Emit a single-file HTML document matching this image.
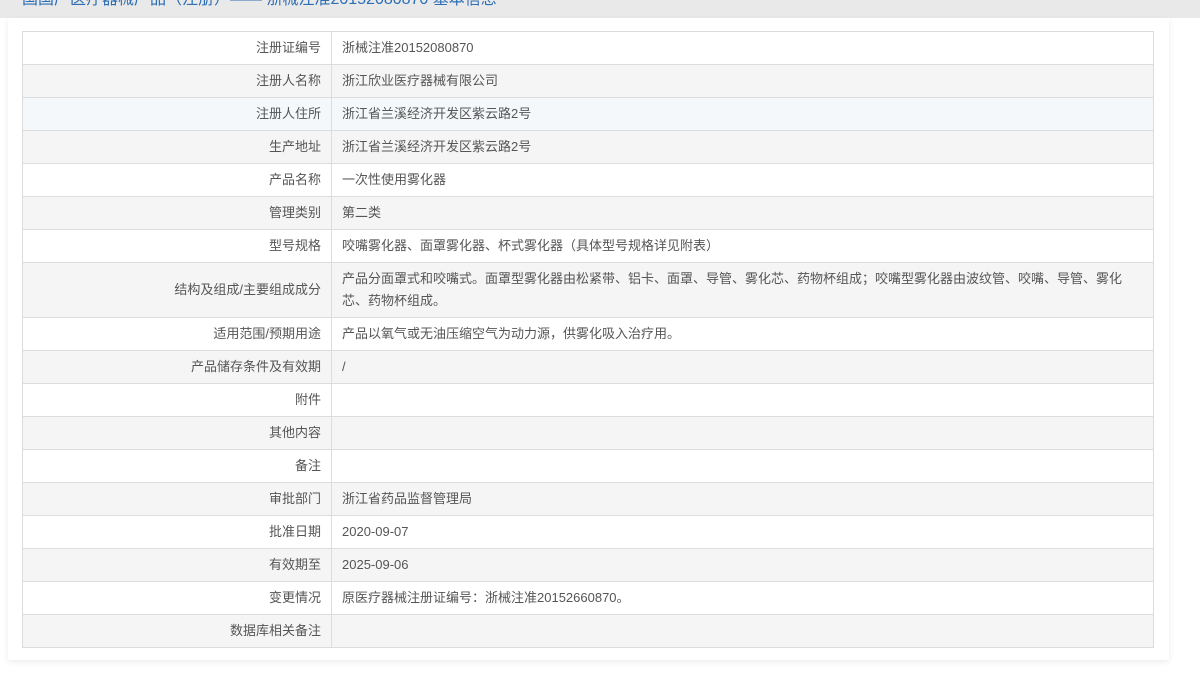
<!DOCTYPE html>
<html><head><meta charset="utf-8"><style>
*{margin:0;padding:0;box-sizing:border-box}
body{width:1200px;height:686px;overflow:hidden;background:#fff;font-family:"Liberation Sans","Noto Sans CJK SC",sans-serif;color:#555;font-size:13px}
.hd{position:absolute;left:0;top:0;width:1200px;height:18px;background:#e9e9e9;overflow:hidden}
.hd span{position:absolute;left:22px;top:-11px;font-size:16px;line-height:22px;color:#2d6fb5;white-space:nowrap}
.panel{position:absolute;left:8px;top:18px;width:1161px;height:642px;background:#fff;box-shadow:0 2px 6px rgba(0,0,0,.08)}
table{position:absolute;left:22px;top:31px;width:1132px;border-collapse:collapse}
td{border:1px solid #dcdcdc;height:33px;vertical-align:middle;line-height:22px;padding-top:0;padding-bottom:0}
td.l{width:309px;text-align:right;padding-right:10px}
td.v{padding-left:10px;padding-right:8px}
tr:nth-child(even) td{background:#f5f5f5}
tr.b td{background:#f5f8fb}
</style></head><body>
<div class="hd"><span>国国产医疗器械产品（注册）—— 浙械注准20152080870 基本信息</span></div>
<div class="panel"></div>
<table>
<tr><td class="l">注册证编号</td><td class="v">浙械注准20152080870</td></tr>
<tr><td class="l">注册人名称</td><td class="v">浙江欣业医疗器械有限公司</td></tr>
<tr class="b"><td class="l">注册人住所</td><td class="v">浙江省兰溪经济开发区紫云路2号</td></tr>
<tr><td class="l">生产地址</td><td class="v">浙江省兰溪经济开发区紫云路2号</td></tr>
<tr><td class="l">产品名称</td><td class="v">一次性使用雾化器</td></tr>
<tr><td class="l">管理类别</td><td class="v">第二类</td></tr>
<tr><td class="l">型号规格</td><td class="v">咬嘴雾化器、面罩雾化器、杯式雾化器（具体型号规格详见附表）</td></tr>
<tr><td class="l" style="height:55px">结构及组成/主要组成成分</td><td class="v">产品分面罩式和咬嘴式。面罩型雾化器由松紧带、铝卡、面罩、导管、雾化芯、药物杯组成；咬嘴型雾化器由波纹管、咬嘴、导管、雾化芯、药物杯组成。</td></tr>
<tr><td class="l">适用范围/预期用途</td><td class="v">产品以氧气或无油压缩空气为动力源，供雾化吸入治疗用。</td></tr>
<tr><td class="l">产品储存条件及有效期</td><td class="v">/</td></tr>
<tr><td class="l">附件</td><td class="v"></td></tr>
<tr><td class="l">其他内容</td><td class="v"></td></tr>
<tr><td class="l">备注</td><td class="v"></td></tr>
<tr><td class="l">审批部门</td><td class="v">浙江省药品监督管理局</td></tr>
<tr><td class="l">批准日期</td><td class="v">2020-09-07</td></tr>
<tr><td class="l">有效期至</td><td class="v">2025-09-06</td></tr>
<tr><td class="l">变更情况</td><td class="v">原医疗器械注册证编号：浙械注准20152660870。</td></tr>
<tr><td class="l">数据库相关备注</td><td class="v"></td></tr>
</table>
</body></html>
